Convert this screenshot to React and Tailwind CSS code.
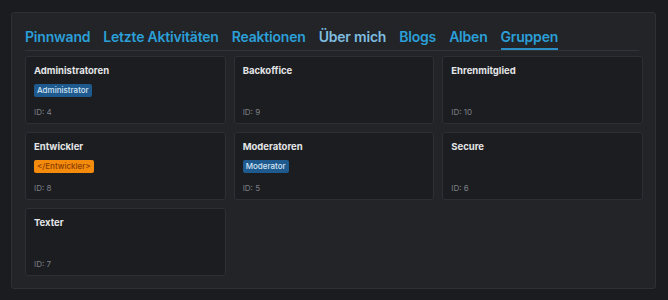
const tabs = [
  { label: "Pinnwand" },
  { label: "Letzte Aktivitäten" },
  { label: "Reaktionen" },
  { label: "Über mich", hover: true },
  { label: "Blogs" },
  { label: "Alben" },
  { label: "Gruppen", active: true },
];

const groups = [
  { name: "Administratoren", id: 4, badge: { text: "Administrator", kind: "blue" } },
  { name: "Backoffice", id: 9 },
  { name: "Ehrenmitglied", id: 10 },
  { name: "Entwickler", id: 8, badge: { text: "</Entwickler>", kind: "orange" } },
  { name: "Moderatoren", id: 5, badge: { text: "Moderator", kind: "blue" } },
  { name: "Secure", id: 6 },
  { name: "Texter", id: 7 },
];

const GroupCard = ({ group }) => {
  const badgeClass =
    group.badge?.kind === "orange"
      ? "bg-[#f48b0c] text-[#8a3c00]"
      : "bg-[#1f5a8e] text-[#d2e4f4]";

  return (
    <div className="h-[68px] rounded-[3px] border border-[#2c2f34] bg-[#1c1d21] px-2 pt-[7px] flex flex-col">
      <div className="text-[9.5px] font-bold leading-[14px] text-[#e4e5e7]">
        {group.name}
      </div>
      <div className="h-[24px] flex items-center">
        {group.badge && (
          <span
            className={`${badgeClass} text-[8px] font-medium leading-[13px] px-[3px] rounded-[2px]`}
          >
            {group.badge.text}
          </span>
        )}
      </div>
      <div className="text-[8px] leading-[12px] text-[#7d8086] mt-[4px]">
        ID: {group.id}
      </div>
    </div>
  );
};

export default function App() {
  return (
    <div
      className="w-[668px] h-[300px] bg-[#1b1c1f] pt-3 pl-[11px]"
      style={{ fontFamily: "Inter, 'Liberation Sans', sans-serif" }}
    >
      <div className="w-[645px] h-[277px] rounded-[3px] border border-[#2d3034] bg-[#222427] px-[13px] pt-[14px]">
        <div className="flex gap-[13px] border-b border-[#30343a] mr-[3px]">
          {tabs.map((t) => (
            <div
              key={t.label}
              className={`text-[14px] font-semibold leading-[20px] pb-[1px] tracking-[-0.2px] border-b-2 ${
                t.active ? "border-[#2a8fc4]" : "border-transparent"
              } ${t.hover ? "text-[#7fbde0]" : "text-[#2b9fd8]"}`}
            >
              {t.label}
            </div>
          ))}
        </div>
        <div className="grid grid-cols-3 gap-x-2 gap-y-2 mt-[5px] w-[618px]">
          {groups.map((g) => (
            <GroupCard key={g.id} group={g} />
          ))}
        </div>
      </div>
    </div>
  );
}
